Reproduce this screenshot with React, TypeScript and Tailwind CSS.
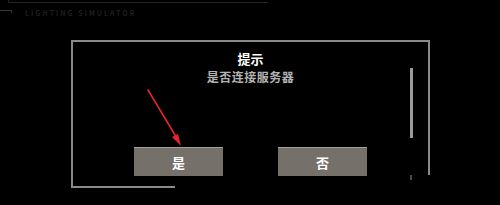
export default function App() {
  return (
    <div
      className="relative w-[500px] h-[205px] overflow-hidden bg-black"
      style={{ fontFamily: '"Noto Sans CJK SC", "Noto Sans", sans-serif' }}
    >
      {/* faint background window edge */}
      <div className="ml-[8px] h-[3px] w-[260px] border-l border-b border-[#242424]" />
      <div className="flex items-start h-[10px]">
        <div className="mt-[7px] w-[12px] h-[3px] border-t border-r border-[#383838]" />
        <span className="ml-[13px] mt-[6px] text-[7px] leading-[8px] tracking-[2px] font-bold text-[#1f1f1f]">
          LIGHTING SIMULATOR
        </span>
      </div>

      {/* dialog */}
      <div className="ml-[71px] mt-[27px] w-[359px]">
        <div className="relative h-[135px] border-t-2 border-l-2 border-r-2 border-[#8a8a8a] flex flex-col items-center">
          <div className="mt-[9px] text-[13px] leading-[16px] font-bold text-white">提示</div>
          <div className="mt-[2px] text-[12px] leading-[16px] font-bold tracking-[0.5px] text-[#b4b4b4]">
            是否连接服务器
          </div>
          <div className="mt-[62px] flex gap-[55px] self-start ml-[61px]">
            <button className="w-[89px] h-[29px] bg-[#75706a] border-t border-[#a49e98] text-white text-[13px] font-bold leading-none">
              是
            </button>
            <button className="w-[89px] h-[29px] bg-[#75706a] border-t border-[#a49e98] text-white text-[13px] font-bold leading-none">
              否
            </button>
          </div>
          <div className="absolute left-[337px] top-[26px] w-[3px] h-[70px] bg-[#9a9a9a]" />
        </div>
        <div className="relative w-[104px] h-[13px] border-l-2 border-b-2 border-[#8a8a8a]">
          <div className="absolute left-[337px] top-[0px] w-[2px] h-[5px] bg-[#4a4a4a]" />
        </div>
      </div>

      {/* red annotation arrow */}
      <svg className="absolute left-0 top-0" width="500" height="205" viewBox="0 0 500 205">
        <line x1="148" y1="90" x2="178" y2="140" stroke="#e3252e" strokeWidth="1.6" strokeLinecap="round" />
        <polygon points="181,146 172,137 178,134" fill="#e3252e" />
      </svg>
    </div>
  );
}
